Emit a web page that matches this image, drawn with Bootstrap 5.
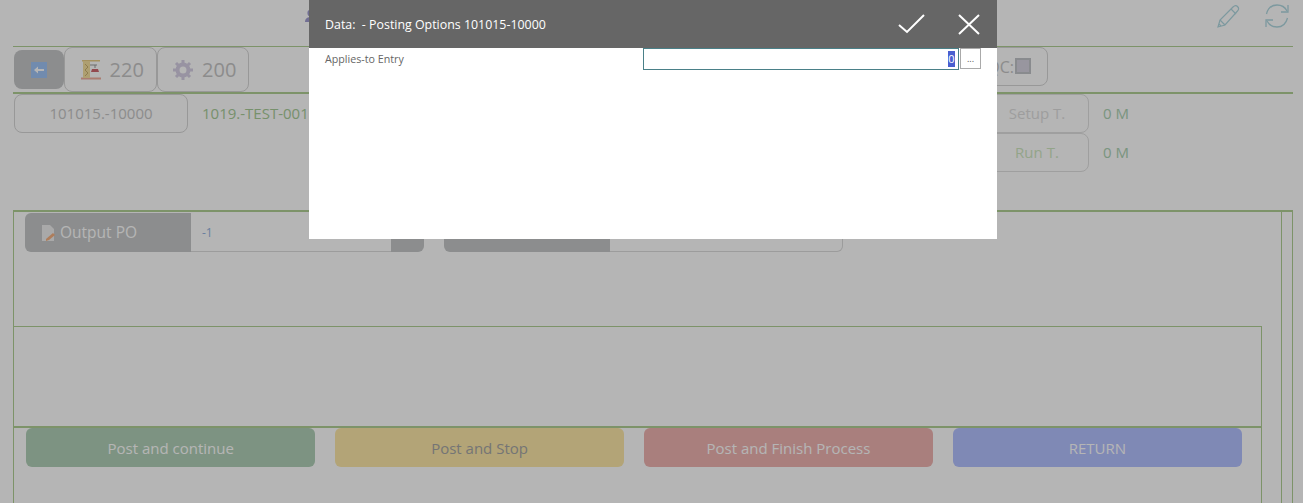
<!DOCTYPE html>
<html lang="en">
<head>
  <meta charset="UTF-8">
  <title>Posting Options</title>
  <meta name="viewport" content="width=device-width, initial-scale=1">
  <link href="https://cdn.jsdelivr.net/npm/bootstrap@5.3.3/dist/css/bootstrap.min.css" rel="stylesheet">
  <style>
    html, body { height: 503px; overflow: hidden; }
    body { background: #fff; font-family: "Open Sans", "Noto Sans", sans-serif; font-size: 15px; color: #c6c6c6; }
    .page-wrap { padding-left: 13px; width: 1293px; }
    .top-bar { height: 46px; padding: 4px 4px 0 0; }
    .top-bar svg { display: block; }
    .user-icon { margin: 4px 0 0 291px; }
    .tool-links { gap: 24px; }
    .line-thin { border-top: 1px solid #b0d094; }
    .line-thick { border-top: 2px solid #b0d094; }
    .tool-row { height: 45px; padding-left: 1px; width: 1035px; }
    .out-btn { border: 1px solid #d6d6d6; border-radius: 8px; background: #fff; color: #c6c6c6; display: flex; align-items: center; justify-content: center; }
    .btn-back { width: 50px; height: 39px; margin-top: 3px; background: #c5c7c8; border-radius: 8px; display: flex; align-items: center; justify-content: center; }
    .btn-step { width: 92.5px; height: 45px; font-size: 20px; gap: 9px; padding-left: 4px; }
    .btn-qc { width: 100px; height: 39px; margin-left: auto; justify-content: flex-end; padding-right: 16px; gap: 1px; font-size: 16px; }
    .qc-box { width: 16px; height: 16px; background: #d6d4e0; border: 2px solid #c2c4c8; display: inline-block; margin-top: -1px; }
    .info-area { height: 116px; padding-left: 1px; }
    .btn-po { width: 174px; height: 39px; }
    .po-name { margin-left: 14px; color: #a8cc98; height: 39px; line-height: 39px; }
    .times { margin-left: auto; width: 186px; margin-right: 122px; }
    .time-row { height: 38.5px; }
    .btn-time { width: 104px; height: 39px; color: #dedede; border-color: #e0e0e0; flex: none; }
    .btn-run { color: #d0e8c2; }
    .time-val { padding-left: 14px; color: #acd2b3; }
    .panel-box { border-top: 2px solid #b0d094; border-left: 1px solid #b0d094; border-right: 1px solid #b0d094; width: 1280px; height: 293px; }
    .panel-main { width: 1268px; border-right: 1px solid #b0d094; }
    .field-row { padding: 1px 0 0 11px; gap: 20px; height: 114px; }
    .field-group { width: 399px; height: 39px; }
    .field-label { width: 166px; background: #c5c7c8; color: #fff; border-radius: 6px 0 0 6px; padding: 1px 0 0 17px; gap: 4px; font-size: 15.5px; }
    .field-value { flex: 1; border-bottom: 1px solid #dcdcdc; padding: 2px 0 0 11px; font-size: 12px; color: #95b4e0; }
    .field-end { width: 33px; background: #c5c7c8; border-radius: 0 6px 6px 0; }
    .field-boxed { border: 1px solid #dcdcdc; border-left: 0; border-radius: 0 6px 6px 0; }
    .lower-box { width: 1248px; height: 177px; border-top: 1px solid #b0d094; border-right: 1px solid #b0d094; }
    .inner-gap { height: 101px; border-bottom: 2px solid #b0d094; }
    .action-row { padding: 0 19px 0 12px; gap: 19.5px; }
    .action-btn { flex: 1; height: 39px; border-radius: 6px; line-height: 41px; text-align: center; color: #fff; }
    .act-green { background: #b1d0b7; }
    .act-yellow { background: #fce8a8; color: #a5a5a5; }
    .act-red { background: #eeb4b1; }
    .act-blue { background: #b4c1ff; }
    .dim-layer { position: fixed; inset: 0; background: rgba(0, 0, 0, .29); z-index: 10; }
    .data-dialog { position: absolute; left: 309px; top: 0; width: 688px; height: 239px; background: #fff; z-index: 20; }
    .dialog-head { height: 48px; background: #666; color: #fff; padding-left: 16px; font-size: 12.4px; }
    .dialog-title { padding-top: 2px; }
    .head-actions { margin-left: auto; gap: 33px; padding-right: 17px; }
    .dialog-body { padding: 0 16px; height: 22px; font-size: 10.7px; color: #666; }
    .entry-label { width: 318px; padding-top: 3px; }
    .entry-input { width: 317px; height: 22px; border: 1px solid #4a8088; padding: 2px 3px 0 0; text-align: right; line-height: 16px; font-size: 11px; }
    .entry-input span { background: #4a5fd0; color: #fff; padding: 0 .5px; display: inline-block; }
    .entry-more { width: 21px; height: 21px; margin-left: 1px; border: 1px solid #aaa; color: #555; font-size: 9px; text-align: center; line-height: 20px; }
  </style>
</head>
<body>
  <div class="page-wrap">
    <div class="top-bar d-flex">
      <svg class="user-icon" width="14" height="14" viewBox="0 0 14 14"><circle cx="7" cy="5" r="3.6" fill="#a09cd0"/><path d="M1 14c0-4 3-5 6-5s6 1 6 5z" fill="#a09cd0"/></svg>
      <div class="tool-links ms-auto d-flex">
        <svg width="24" height="24" viewBox="0 0 24 24" fill="none" stroke="#b0d8e0" stroke-width="1.2"><path d="M1 23l2-7L16 3c2-2 3-2 4.500-.5s1.500 3 0 4.500L8 21z"/><path d="M3 16l5 5M14 5l5 5M2 20l2 2"/></svg>
        <svg width="24" height="24" viewBox="0 0 24 24" fill="none" stroke="#b0d8e0" stroke-width="1.3"><path d="M1.500 10C3 4 7 1 12 1c4 0 8 2 10 6"/><path d="M22.500 14C21 20 17 23 12 23c-4 0-8-2-10-6"/><path d="M23 1v7h-7M1 23v-7h7"/></svg>
      </div>
    </div>
    <div class="line-thin"></div>
    <div class="tool-row d-flex">
      <div class="btn-back">
        <svg width="16" height="16" viewBox="0 0 16 16"><rect width="16" height="16" fill="#9fc4f5"/><path d="M3 8l4-3.500V7h6v2H7v2.500z" fill="#fff"/></svg>
      </div>
      <div class="out-btn btn-step">
        <svg width="20" height="20" viewBox="0 0 20 20"><rect x="0" y="17.500" width="20" height="2" fill="#f0b0a0"/><rect x="1" y="0" width="18" height="1.500" fill="#e8cc88"/><rect x="2" y="1" width="7" height="17" fill="#f5e0a0"/><path d="M4 4l3 3-3 3 3 3-3 3" stroke="#c8b070" fill="none"/><path d="M9 5h7M14 5v3" stroke="#999" fill="none"/><path d="M10 12l1-3h6l1 3z" fill="#d06870"/></svg>
        <span>220</span>
      </div>
      <div class="out-btn btn-step">
        <svg width="20" height="20" viewBox="0 0 20 20"><circle cx="10" cy="10" r="5.500" fill="none" stroke="#d6cfe4" stroke-width="4"/><path d="M10 0v4M10 16v4M0 10h4M16 10h4M3 3l3 3M14 14l3 3M17 3l-3 3M6 14l-3 3" stroke="#d6cfe4" stroke-width="3"/></svg>
        <span>200</span>
      </div>
      <div class="out-btn btn-qc"><span>QC:</span><span class="qc-box"></span></div>
    </div>
    <div class="line-thick"></div>
    <div class="info-area d-flex">
      <div class="out-btn btn-po">101015.-10000</div>
      <div class="po-name">1019.-TEST-001</div>
      <div class="times">
        <div class="time-row d-flex"><div class="out-btn btn-time">Setup T.</div><div class="time-val d-flex align-items-center">0 M</div></div>
        <div class="time-row d-flex"><div class="out-btn btn-time btn-run">Run T.</div><div class="time-val d-flex align-items-center">0 M</div></div>
      </div>
    </div>
    <div class="panel-box d-flex">
      <div class="panel-main">
        <div class="field-row d-flex">
          <div class="field-group d-flex">
            <div class="field-label d-flex align-items-center">
              <svg width="14" height="16" viewBox="0 0 14 16"><path d="M0 0h8l4 4v12H0z" fill="#eee"/><path d="M4 14l7-6 2 2-6 5-3 1z" fill="#f5b080"/></svg>
              <span>Output PO</span>
            </div>
            <div class="field-value d-flex align-items-center">-1</div>
            <div class="field-end"></div>
          </div>
          <div class="field-group d-flex">
            <div class="field-label"></div>
            <div class="field-value field-boxed"></div>
          </div>
        </div>
        <div class="lower-box">
          <div class="inner-gap"></div>
          <div class="action-row d-flex">
            <div class="action-btn act-green">Post and continue</div>
            <div class="action-btn act-yellow">Post and Stop</div>
            <div class="action-btn act-red">Post and Finish Process</div>
            <div class="action-btn act-blue">RETURN</div>
          </div>
        </div>
      </div>
    </div>
  </div>

  <div class="dim-layer"></div>

  <div class="data-dialog">
    <div class="dialog-head d-flex align-items-center">
      <span class="dialog-title">Data:&nbsp; - Posting Options 101015-10000</span>
      <div class="head-actions d-flex align-items-center">
        <svg width="27" height="20" viewBox="0 0 27 20" fill="none" stroke="#fff" stroke-width="2"><path d="M1 11l8 7L26 1"/></svg>
        <svg width="22" height="21" viewBox="0 0 22 21" fill="none" stroke="#fff" stroke-width="2"><path d="M1 1l20 19M21 1L1 20"/></svg>
      </div>
    </div>
    <div class="dialog-body d-flex">
      <div class="entry-label">Applies-to Entry</div>
      <div class="entry-input"><span>0</span></div>
      <div class="entry-more">...</div>
    </div>
  </div>

  <script src="https://cdn.jsdelivr.net/npm/bootstrap@5.3.3/dist/js/bootstrap.bundle.min.js"></script>
</body>
</html>
